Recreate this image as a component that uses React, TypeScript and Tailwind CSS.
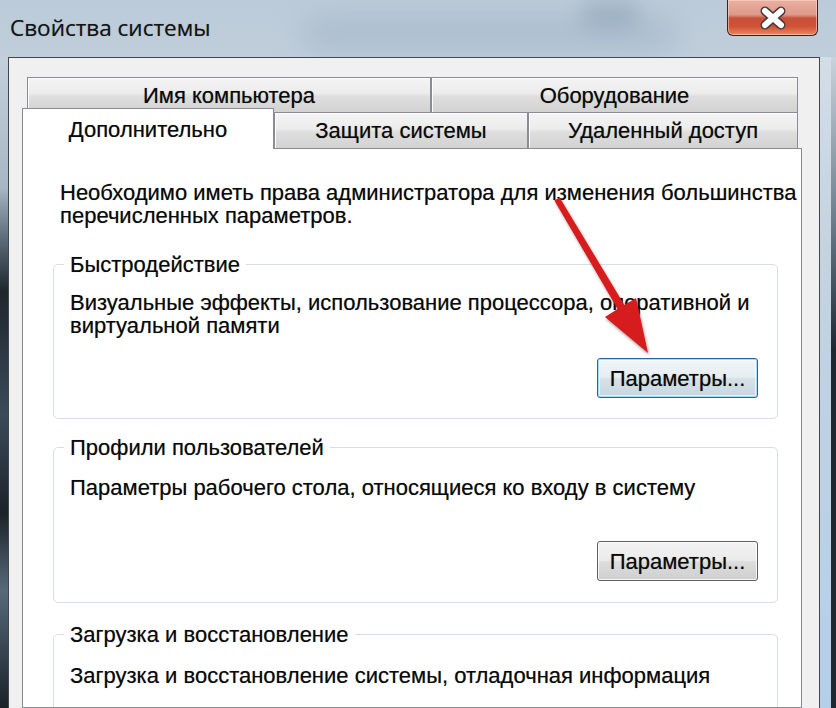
import React from "react";

const tabCls =
  "flex items-center justify-center border border-[#898c95] bg-[linear-gradient(180deg,#f4f4f4_0%,#ececec_45%,#dedede_55%,#d2d2d2_100%)] shadow-[inset_1px_1px_0_rgba(255,255,255,0.9)] whitespace-nowrap";

function Group({
  title,
  children,
  className,
}: {
  title: string;
  children: React.ReactNode;
  className?: string;
}) {
  return (
    <fieldset
      className={
        "m-0 rounded-[5px] border border-[#d5dfe5] p-0 " + (className ?? "")
      }
    >
      <legend className="ml-[10px] px-[6px] leading-[23px] whitespace-nowrap">
        {title}
      </legend>
      {children}
    </fieldset>
  );
}

export default function App() {
  return (
    <div className="relative h-[708px] w-[836px] overflow-hidden bg-[linear-gradient(180deg,#bccbd9_0%,#cfdae4_40%,#d9e2ea_100%)] font-['Liberation_Sans',Arial,sans-serif] text-[22px] leading-[23px] text-[#0a0a0a] [text-shadow:0_0_0.8px_rgba(0,0,0,0.45)]">
      {/* blurred glass smudges */}
      <div className="pointer-events-none absolute left-[300px] top-[14px] h-[40px] w-[380px] rounded-full bg-[#9fb2c4] opacity-50 blur-[14px]" />
      <div className="pointer-events-none absolute left-[580px] top-[0px] h-[30px] w-[60px] rounded-full bg-[#7f98b0] opacity-40 blur-[10px]" />

      {/* title bar */}
      <div className="relative flex h-[57px] items-start justify-between">
        <div className="ml-[10px] mt-[14px] font-['Open_Sans',sans-serif] text-[22.5px] leading-[28px] text-[#141414]">
          Свойства системы
        </div>
        <div className="mr-[18px] flex h-[36px] w-[91px] items-center justify-center rounded-b-[6px] border border-t-0 border-[#3b2220] bg-[linear-gradient(180deg,#eab0a2_0%,#de998a_42%,#c8503a_52%,#cf5235_75%,#e7895f_100%)] shadow-[inset_0_0_0_1px_rgba(255,220,210,0.55)]">
          <svg width="30" height="24" viewBox="0 0 30 24">
            <path
              d="M7 5 L23 19 M23 5 L7 19"
              stroke="#4a3a3a"
              strokeWidth="9"
              strokeLinecap="round"
              fill="none"
            />
            <path
              d="M7 5 L23 19 M23 5 L7 19"
              stroke="#ffffff"
              strokeWidth="6"
              strokeLinecap="round"
              fill="none"
            />
          </svg>
        </div>
      </div>

      {/* body */}
      <div className="relative flex h-[651px]">
        <div className="w-[8px] shrink-0 bg-[linear-gradient(180deg,#c3d0dc_0%,#a8b7c5_20%,#5b6b79_28%,#1f262d_36%,#3b4b5a_55%,#1c2229_70%,#56697a_82%,#1b2128_100%)]" />

        <div className="flex min-w-0 flex-1 flex-col overflow-hidden border-x border-t border-[#3f4750] bg-[#f0f0f0] pl-[13px] pr-[17px] pt-[19px]">
          {/* tab row 1 */}
          <div className="ml-[5px] mr-[4px] flex h-[36px] shrink-0">
            <div className={tabCls + " w-[404px]"}>Имя компьютера</div>
            <div className={tabCls + " flex-1"}>Оборудование</div>
          </div>
          {/* tab row 2 */}
          <div className="-mt-px mr-[4px] flex h-[36px] shrink-0">
            <div className="relative z-10 -mb-px -mt-[4px] flex w-[252px] items-center justify-center border-x border-t border-[#898c95] bg-white">
              Дополнительно
            </div>
            <div className={tabCls + " w-[254px] border-b-0"}>Защита системы</div>
            <div className={tabCls + " flex-1 border-b-0"}>Удаленный доступ</div>
          </div>

          {/* panel */}
          <div className="min-h-0 flex-1 overflow-hidden border border-[#898c95] bg-white pl-[30px] pr-[23px] pt-[32px]">
            <div className="ml-[7px] whitespace-nowrap">
              Необходимо иметь права администратора для изменения большинства
              <br />
              перечисленных параметров.
            </div>

            <Group title="Быстродействие" className="mt-[26px]">
              <div className="flex flex-col pb-[20px] pl-[16px] pr-[19px] pt-[15px]">
                <div className="whitespace-nowrap">
                  Визуальные эффекты, использование процессора, оперативной и
                  <br />
                  виртуальной памяти
                </div>
                <div className="mt-[21px] flex justify-end">
                  <div className="flex h-[40px] w-[161px] items-center justify-center rounded-[3px] border border-[#2b6592] bg-[linear-gradient(180deg,#f1f5f8_0%,#e6edf1_48%,#d6e1e7_52%,#c8d6de_100%)] shadow-[inset_0_0_0_1px_#9fdcf6,inset_0_0_0_2px_rgba(255,255,255,0.6)]">
                    Параметры...
                  </div>
                </div>
              </div>
            </Group>

            <Group title="Профили пользователей" className="mt-[17px]">
              <div className="flex flex-col pb-[21px] pl-[16px] pr-[19px] pt-[17px]">
                <div className="whitespace-nowrap">
                  Параметры рабочего стола, относящиеся ко входу в систему
                </div>
                <div className="mt-[42px] flex justify-end">
                  <div className="flex h-[40px] w-[161px] items-center justify-center rounded-[3px] border border-[#5e5e5e] bg-[linear-gradient(180deg,#f2f2f2_0%,#ebebeb_48%,#dddddd_52%,#cfcfcf_100%)] shadow-[inset_0_0_0_1px_rgba(255,255,255,0.8)]">
                    Параметры...
                  </div>
                </div>
              </div>
            </Group>

            <Group title="Загрузка и восстановление" className="mt-[20px]">
              <div className="flex flex-col pb-[60px] pl-[16px] pr-[19px] pt-[18px]">
                <div className="whitespace-nowrap">
                  Загрузка и восстановление системы, отладочная информация
                </div>
              </div>
            </Group>
          </div>
        </div>

        <div className="flex w-[16px] shrink-0">
          <div className="flex-1 bg-[linear-gradient(180deg,#d3dde6_0%,#c4d3e0_30%,#b5cfe8_100%)]" />
          <div className="w-[5px] bg-[linear-gradient(180deg,#c9d3dc_0%,#6d7d8c_25%,#1d2833_45%,#1d2833_100%)]" />
        </div>
      </div>

      {/* red annotations */}
      <svg
        className="pointer-events-none absolute inset-0"
        width="836"
        height="708"
        viewBox="0 0 836 708"
      >
        <defs>
          <filter id="sh" x="-20%" y="-50%" width="140%" height="200%">
            <feDropShadow dx="1" dy="2" stdDeviation="1.6" floodColor="#000" floodOpacity="0.4" />
          </filter>
        </defs>
        <path d="M45 149 L245 149" stroke="#c8232a" strokeWidth="4" strokeLinecap="round" filter="url(#sh)" />
        <path d="M65 283 L294 283" stroke="#c8232a" strokeWidth="4" strokeLinecap="round" filter="url(#sh)" />
        <polygon
          points="559.6,197.5 554.4,200.5 617.6,309 605,317 648,353 636,298 624.4,305"
          fill="#d61a1c"
          filter="url(#sh)"
        />
      </svg>
    </div>
  );
}
